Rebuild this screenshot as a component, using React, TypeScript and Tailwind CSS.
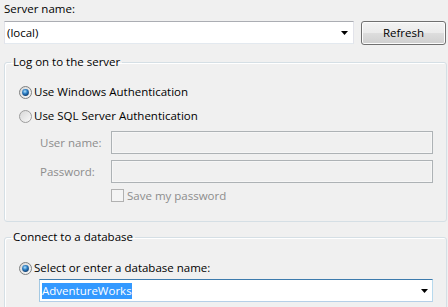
import React from "react";

function Radio({ checked, id }: { checked: boolean; id: string }) {
  return (
    <svg width="13" height="13" viewBox="0 0 13 13" className="shrink-0 block">
      <defs>
        <linearGradient id={`bg-${id}`} x1="0" y1="0" x2="1" y2="1">
          <stop offset="0" stopColor="#d6d6d6" />
          <stop offset="1" stopColor="#fafafa" />
        </linearGradient>
        <radialGradient id={`dot-${id}`} cx="0.42" cy="0.35" r="0.75">
          <stop offset="0" stopColor="#b4e2fb" />
          <stop offset="0.45" stopColor="#2a7dc4" />
          <stop offset="1" stopColor="#0b2d58" />
        </radialGradient>
      </defs>
      <circle cx="6.5" cy="6.5" r="6" fill={`url(#bg-${id})`} stroke={checked ? "#7f8081" : "#9c9c9c"} strokeWidth="1" />
      {checked && <circle cx="6.5" cy="6.5" r="3.4" fill={`url(#dot-${id})`} />}
    </svg>
  );
}

function Arrow() {
  return (
    <svg width="7" height="4" viewBox="0 0 7 4" className="block shrink-0">
      <path d="M0 0H7L3.5 4Z" fill="#000" />
    </svg>
  );
}

export default function App() {
  return (
    <div className="w-[448px] h-[307px] overflow-hidden bg-[#f0f0f0] pl-[4px] pt-[1px] text-black font-['Open_Sans',Arial,sans-serif] text-[11.5px]">
      <div className="leading-[16px] h-[16px]">Server name:</div>
      <div className="mt-[4px] flex items-start">
        <div className="w-[350px] h-[23px] bg-white border border-[#e2e3ea] border-t-[#abadb3] border-b-[#e3e9ef] flex items-center pl-[2px] pr-[5px]">
          <span className="flex-1 leading-[16px]">(local)</span>
          <Arrow />
        </div>
        <div className="ml-[7px] w-[85px] h-[24px] rounded-[3px] border border-[#707070] bg-[linear-gradient(to_bottom,#f3f3f3_0%,#ebebeb_48%,#dddddd_52%,#cfcfcf_100%)] shadow-[inset_0_0_0_1px_#fcfcfc] flex items-center justify-center leading-[16px]">
          Refresh
        </div>
      </div>

      <fieldset className="mt-[9px] w-[443px] h-[168px] border border-[#d5dfe5] rounded-[3px] shadow-[inset_1px_1px_0_#ffffff] pl-[14px]">
        <legend className="ml-[-8px] px-[2px] leading-[16px]">Log on to the server</legend>
        <div className="mt-[14px] h-[16px] flex items-center">
          <Radio checked id="r1" />
          <span className="ml-[2px] leading-[16px]">Use Windows Authentication</span>
        </div>
        <div className="mt-[8px] h-[16px] flex items-center">
          <Radio checked={false} id="r2" />
          <span className="ml-[2px] leading-[16px]">Use SQL Server Authentication</span>
        </div>
        <div className="mt-[7px] ml-[21px] flex items-center">
          <span className="w-[71px] leading-[16px] text-[#8d8d8d]">User name:</span>
          <div className="w-[322px] h-[23px] border border-[#adb2b5] bg-[#f0f0f0] shadow-[inset_0_0_0_1px_#f6f6f6]" />
        </div>
        <div className="mt-[6px] ml-[21px] flex items-center">
          <span className="w-[71px] leading-[16px] text-[#8d8d8d]">Password:</span>
          <div className="w-[322px] h-[23px] border border-[#adb2b5] bg-[#f0f0f0] shadow-[inset_0_0_0_1px_#f6f6f6]" />
        </div>
        <div className="mt-[6px] ml-[92px] h-[13px] flex items-center">
          <div className="w-[13px] h-[13px] border border-[#b1b1b1] bg-[#f4f4f4]" />
          <span className="ml-[3px] leading-[16px] text-[#8d8d8d]">Save my password</span>
        </div>
      </fieldset>

      <fieldset className="mt-[7px] w-[443px] h-[100px] border border-[#d5dfe5] rounded-[3px] shadow-[inset_1px_1px_0_#ffffff] pl-[14px]">
        <legend className="ml-[-8px] px-[2px] leading-[16px]">Connect to a database</legend>
        <div className="mt-[15px] h-[16px] flex items-center">
          <Radio checked id="r3" />
          <span className="ml-[2px] leading-[16px]">Select or enter a database name:</span>
        </div>
        <div className="mt-[3px] ml-[20px] w-[394px] h-[23px] bg-white border border-[#b7d9ed] border-t-[#3d7bad] border-b-[#b5cfe7] border-l-[#a4c9e3] flex items-center pl-[2px] pr-[4px]">
          <div className="flex-1">
            <span className="bg-[#3399ff] text-white leading-[16px] inline-block">AdventureWorks</span>
          </div>
          <Arrow />
        </div>
      </fieldset>
    </div>
  );
}
